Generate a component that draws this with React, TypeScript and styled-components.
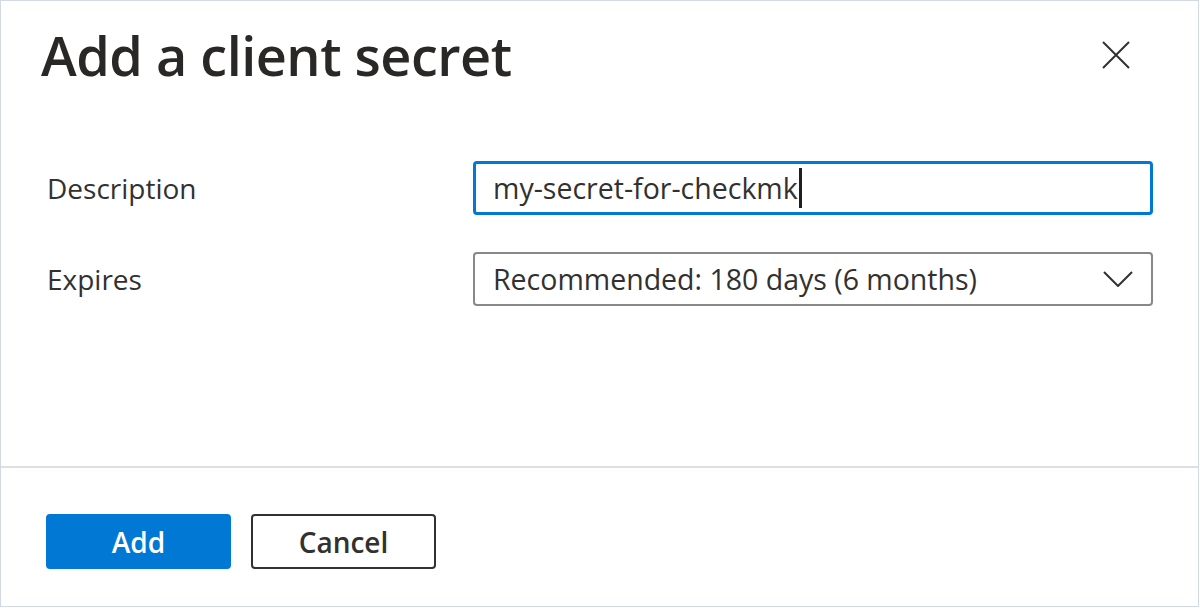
import styled, { createGlobalStyle } from "styled-components"

const GlobalStyle = createGlobalStyle`
  html, body {
    margin: 0;
    padding: 0;
    background: #ffffff;
  }
  body {
    font-family: "Open Sans", "Noto Sans", sans-serif;
    color: #323130;
  }
`

const Panel = styled.div`
  box-sizing: border-box;
  width: 1199px;
  height: 607px;
  border: 1px solid #d3d9e3;
  background: #ffffff;
  display: flex;
  flex-direction: column;
`

const Header = styled.header`
  display: flex;
  align-items: center;
  justify-content: space-between;
  height: 108px;
  padding: 0 68px 0 40px;
`

const Title = styled.h1`
  margin: 0;
  font-size: 54px;
  font-weight: 600;
  letter-spacing: -0.5px;
  color: #292827;
`

const IconButton = styled.button`
  display: flex;
  align-items: center;
  justify-content: center;
  width: 28px;
  height: 28px;
  padding: 0;
  border: none;
  background: none;
  color: #323130;
  cursor: pointer;
`

const Form = styled.div`
  flex: 1;
  display: grid;
  grid-template-columns: 426px 680px;
  grid-auto-rows: 54px;
  row-gap: 37px;
  align-items: center;
  padding: 52px 0 0 46px;
`

const Label = styled.label`
  font-size: 28px;
  color: #323130;
`

const Field = styled.div<{ $focused?: boolean }>`
  box-sizing: border-box;
  height: 54px;
  display: flex;
  align-items: center;
  justify-content: space-between;
  padding: 0 ${p => (p.$focused ? "17px" : "18px")};
  border: ${p => (p.$focused ? "3px solid #0078d4" : "2px solid #8a8886")};
  border-radius: 4px;
  font-size: 28.5px;
  color: #323130;
  background: #ffffff;
`

const Value = styled.span`
  display: inline-flex;
  align-items: center;
`

const Caret = styled.span`
  display: inline-block;
  width: 3px;
  height: 40px;
  margin-left: 1px;
  background: #201f1e;
`

const Footer = styled.footer`
  display: flex;
  gap: 20px;
  height: 140px;
  box-sizing: border-box;
  padding: 46px 0 0 45px;
  border-top: 2px solid #dcdfe3;
`

const Button = styled.button<{ $primary?: boolean }>`
  box-sizing: border-box;
  width: 185px;
  height: 55px;
  border-radius: 4px;
  font-family: inherit;
  font-size: 28px;
  font-weight: 600;
  cursor: pointer;
  border: 2px solid ${p => (p.$primary ? "#0078d4" : "#323130")};
  background: ${p => (p.$primary ? "#0078d4" : "#ffffff")};
  color: ${p => (p.$primary ? "#ffffff" : "#323130")};
`

function CloseIcon() {
  return (
    <svg width="28" height="28" viewBox="0 0 28 28" fill="none">
      <path d="M1 1 L27 27 M27 1 L1 27" stroke="#323130" strokeWidth="2" />
    </svg>
  )
}

function ChevronIcon() {
  return (
    <svg width="30" height="16" viewBox="0 0 30 16" fill="none">
      <path d="M1 1 L15 15 L29 1" stroke="#323130" strokeWidth="2" />
    </svg>
  )
}

export default function App() {
  return (
    <>
      <GlobalStyle />
      <Panel>
        <Header>
          <Title>Add a client secret</Title>
          <IconButton aria-label="Close"><CloseIcon /></IconButton>
        </Header>
        <Form>
          <Label>Description</Label>
          <Field $focused>
            <Value>my-secret-for-checkmk<Caret /></Value>
          </Field>
          <Label>Expires</Label>
          <Field>
            <Value>Recommended: 180 days (6 months)</Value>
            <ChevronIcon />
          </Field>
        </Form>
        <Footer>
          <Button $primary>Add</Button>
          <Button>Cancel</Button>
        </Footer>
      </Panel>
    </>
  )
}
